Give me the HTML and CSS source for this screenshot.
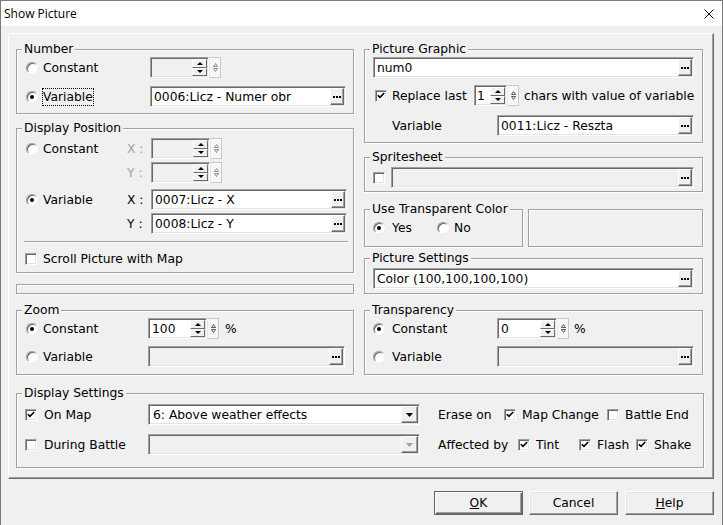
FILE: index.html
```html
<!DOCTYPE html>
<html>
<head>
<meta charset="utf-8">
<link rel="stylesheet" href="styles.css">
</head>
<body>
<div class="win">
  <div class="titlebar">
    <span class="title">Show Picture</span>
    <svg class="close" width="10" height="10" viewBox="0 0 10 10"><path d="M0.5 0.5 L9.5 9.5 M9.5 0.5 L0.5 9.5" stroke="#000" stroke-width="1" fill="none"/></svg>
  </div>

  <div class="panel">
    <div class="cols">
      <div class="col col-l">

        <div class="group g-num">
          <div class="legend">Number</div>
          <div class="row mt7">
            <div class="opt ow133"><span class="radio"></span><span>Constant</span></div>
            <div class="spin dis">
              <div class="spin-box sw59"><span class="spin-val"></span><span class="ud"><i class="up"></i><i class="dn"></i></span></div>
              <span class="spx"><svg width="5" height="9" viewBox="0 0 5 9"><path d="M2.5 0.5 L4.5 3.5 L0.5 3.5 Z M0.5 5.5 L4.5 5.5 L2.5 8.5 Z" fill="none" stroke="#777" stroke-width="0.8"/></svg></span>
            </div>
          </div>
          <div class="row mt8">
            <div class="opt ow133"><span class="radio on"></span><span class="focus">Variable</span></div>
            <div class="field fw196"><span class="txt">0006:Licz - Numer obr</span><span class="dots"><svg width="8" height="2" viewBox="0 0 8 2"><rect x="0" y="0" width="2" height="2"/><rect x="3" y="0" width="2" height="2"/><rect x="6" y="0" width="2" height="2"/></svg></span></div>
          </div>
        </div>

        <div class="group g-pos">
          <div class="legend">Display Position</div>
          <div class="row mt9">
            <div class="opt ow110"><span class="radio"></span><span>Constant</span></div>
            <span class="xy dis-t">X :</span>
            <div class="spin dis">
              <div class="spin-box sw59"><span class="spin-val"></span><span class="ud"><i class="up"></i><i class="dn"></i></span></div>
              <span class="spx"><svg width="5" height="9" viewBox="0 0 5 9"><path d="M2.5 0.5 L4.5 3.5 L0.5 3.5 Z M0.5 5.5 L4.5 5.5 L2.5 8.5 Z" fill="none" stroke="#777" stroke-width="0.8"/></svg></span>
            </div>
          </div>
          <div class="row mt3">
            <span class="ow110"></span>
            <span class="xy dis-t">Y :</span>
            <div class="spin dis">
              <div class="spin-box sw59"><span class="spin-val"></span><span class="ud"><i class="up"></i><i class="dn"></i></span></div>
              <span class="spx"><svg width="5" height="9" viewBox="0 0 5 9"><path d="M2.5 0.5 L4.5 3.5 L0.5 3.5 Z M0.5 5.5 L4.5 5.5 L2.5 8.5 Z" fill="none" stroke="#777" stroke-width="0.8"/></svg></span>
            </div>
          </div>
          <div class="row mt6">
            <div class="opt ow110"><span class="radio on"></span><span>Variable</span></div>
            <span class="xy">X :</span>
            <div class="field fw196"><span class="txt">0007:Licz - X</span><span class="dots"><svg width="8" height="2" viewBox="0 0 8 2"><rect x="0" y="0" width="2" height="2"/><rect x="3" y="0" width="2" height="2"/><rect x="6" y="0" width="2" height="2"/></svg></span></div>
          </div>
          <div class="row mt3">
            <span class="ow110"></span>
            <span class="xy">Y :</span>
            <div class="field fw196"><span class="txt">0008:Licz - Y</span><span class="dots"><svg width="8" height="2" viewBox="0 0 8 2"><rect x="0" y="0" width="2" height="2"/><rect x="3" y="0" width="2" height="2"/><rect x="6" y="0" width="2" height="2"/></svg></span></div>
          </div>
          <div class="sep"></div>
          <div class="row mt5">
            <div class="opt ck-opt"><span class="check"></span><span>Scroll Picture with Map</span></div>
          </div>
        </div>

        <div class="group g-empty"></div>

        <div class="group g-zoom">
          <div class="legend">Zoom</div>
          <div class="row mt7">
            <div class="opt ow131"><span class="radio on"></span><span>Constant</span></div>
            <div class="spin">
              <div class="spin-box sw59"><span class="spin-val">100</span><span class="ud"><i class="up"></i><i class="dn"></i></span></div>
              <span class="spx"><svg width="5" height="9" viewBox="0 0 5 9"><path d="M2.5 0.5 L4.5 3.5 L0.5 3.5 Z M0.5 5.5 L4.5 5.5 L2.5 8.5 Z" fill="none" stroke="#333" stroke-width="0.8"/></svg></span>
            </div>
            <span class="pct">%</span>
          </div>
          <div class="row mt7">
            <div class="opt ow131"><span class="radio"></span><span>Variable</span></div>
            <div class="field dis fw197"><span class="txt"></span><span class="dots"><svg width="8" height="2" viewBox="0 0 8 2"><rect x="0" y="0" width="2" height="2"/><rect x="3" y="0" width="2" height="2"/><rect x="6" y="0" width="2" height="2"/></svg></span></div>
          </div>
        </div>

      </div>

      <div class="col col-r">

        <div class="group g-pg">
          <div class="legend">Picture Graphic</div>
          <div class="row mt7 pl8">
            <div class="field fw321"><span class="txt">num0</span><span class="dots"><svg width="8" height="2" viewBox="0 0 8 2"><rect x="0" y="0" width="2" height="2"/><rect x="3" y="0" width="2" height="2"/><rect x="6" y="0" width="2" height="2"/></svg></span></div>
          </div>
          <div class="row mt7">
            <div class="opt rl-opt"><span class="check on"><svg width="8" height="7" viewBox="0 0 8 7"><path d="M0.8 3.2 L3 5.4 L7.2 1" fill="none" stroke="#000" stroke-width="1.6"/></svg></span><span>Replace last</span></div>
            <div class="spin">
              <div class="spin-box sw33"><span class="spin-val sv1">1</span><span class="ud"><i class="up"></i><i class="dn"></i></span></div>
              <span class="spx"><svg width="5" height="9" viewBox="0 0 5 9"><path d="M2.5 0.5 L4.5 3.5 L0.5 3.5 Z M0.5 5.5 L4.5 5.5 L2.5 8.5 Z" fill="none" stroke="#333" stroke-width="0.8"/></svg></span>
            </div>
            <span class="after-spin">chars with value of variable</span>
          </div>
          <div class="row mt9">
            <span class="lbl-var">Variable</span>
            <div class="field fw197"><span class="txt">0011:Licz - Reszta</span><span class="dots"><svg width="8" height="2" viewBox="0 0 8 2"><rect x="0" y="0" width="2" height="2"/><rect x="3" y="0" width="2" height="2"/><rect x="6" y="0" width="2" height="2"/></svg></span></div>
          </div>
        </div>

        <div class="group g-sprite">
          <div class="legend">Spritesheet</div>
          <div class="row mt9 pl8">
            <span class="check"></span>
            <div class="field dis fw303 ml6"><span class="txt"></span><span class="dots"><svg width="8" height="2" viewBox="0 0 8 2"><rect x="0" y="0" width="2" height="2"/><rect x="3" y="0" width="2" height="2"/><rect x="6" y="0" width="2" height="2"/></svg></span></div>
          </div>
        </div>

        <div class="trow">
          <div class="group g-utc">
            <div class="legend">Use Transparent Color</div>
            <div class="row mt7 pl8">
              <span class="radio on"></span><span class="yes">Yes</span>
              <span class="radio"></span><span class="no">No</span>
            </div>
          </div>
          <div class="group g-blank"></div>
        </div>

        <div class="group g-ps">
          <div class="legend">Picture Settings</div>
          <div class="row mt9 pl8">
            <div class="field fw321"><span class="txt">Color (100,100,100,100)</span><span class="dots"><svg width="8" height="2" viewBox="0 0 8 2"><rect x="0" y="0" width="2" height="2"/><rect x="3" y="0" width="2" height="2"/><rect x="6" y="0" width="2" height="2"/></svg></span></div>
          </div>
        </div>

        <div class="group g-tr">
          <div class="legend">Transparency</div>
          <div class="row mt7">
            <div class="opt ow132"><span class="radio on"></span><span>Constant</span></div>
            <div class="spin">
              <div class="spin-box sw60"><span class="spin-val">0</span><span class="ud"><i class="up"></i><i class="dn"></i></span></div>
              <span class="spx"><svg width="5" height="9" viewBox="0 0 5 9"><path d="M2.5 0.5 L4.5 3.5 L0.5 3.5 Z M0.5 5.5 L4.5 5.5 L2.5 8.5 Z" fill="none" stroke="#333" stroke-width="0.8"/></svg></span>
            </div>
            <span class="pct pct5">%</span>
          </div>
          <div class="row mt7">
            <div class="opt ow132"><span class="radio"></span><span>Variable</span></div>
            <div class="field dis fw197"><span class="txt"></span><span class="dots"><svg width="8" height="2" viewBox="0 0 8 2"><rect x="0" y="0" width="2" height="2"/><rect x="3" y="0" width="2" height="2"/><rect x="6" y="0" width="2" height="2"/></svg></span></div>
          </div>
        </div>

      </div>
    </div>

    <div class="group g-ds">
      <div class="legend">Display Settings</div>
      <div class="row mt10">
        <div class="opt ds-opt"><span class="check on"><svg width="8" height="7" viewBox="0 0 8 7"><path d="M0.8 3.2 L3 5.4 L7.2 1" fill="none" stroke="#000" stroke-width="1.6"/></svg></span><span>On Map</span></div>
        <div class="combo"><span class="txt">6: Above weather effects</span><span class="arrow"><svg width="7" height="4" viewBox="0 0 7 4"><path d="M0 0 L7 0 L3.5 4 Z" fill="#000"/></svg></span></div>
        <span class="ds-lbl w66">Erase on</span>
        <span class="check on"><svg width="8" height="7" viewBox="0 0 8 7"><path d="M0.8 3.2 L3 5.4 L7.2 1" fill="none" stroke="#000" stroke-width="1.6"/></svg></span>
        <span class="ck-lbl w85">Map Change</span>
        <span class="check"></span>
        <span class="ck-lbl">Battle End</span>
      </div>
      <div class="row mt9">
        <div class="opt ds-opt"><span class="check"></span><span>During Battle</span></div>
        <div class="combo dis"><span class="txt"></span><span class="arrow"><svg width="7" height="4" viewBox="0 0 7 4"><path d="M0 0 L7 0 L3.5 4 Z" fill="#a0a0a0"/></svg></span></div>
        <span class="ds-lbl w80">Affected by</span>
        <span class="check on"><svg width="8" height="7" viewBox="0 0 8 7"><path d="M0.8 3.2 L3 5.4 L7.2 1" fill="none" stroke="#000" stroke-width="1.6"/></svg></span>
        <span class="ck-lbl w43">Tint</span>
        <span class="check on"><svg width="8" height="7" viewBox="0 0 8 7"><path d="M0.8 3.2 L3 5.4 L7.2 1" fill="none" stroke="#000" stroke-width="1.6"/></svg></span>
        <span class="ck-lbl w39">Flash</span>
        <span class="check on"><svg width="8" height="7" viewBox="0 0 8 7"><path d="M0.8 3.2 L3 5.4 L7.2 1" fill="none" stroke="#000" stroke-width="1.6"/></svg></span>
        <span class="ck-lbl">Shake</span>
      </div>
    </div>
  </div>

  <div class="btns">
    <div class="btn def"><span><u>O</u>K</span></div>
    <div class="btn">Cancel</div>
    <div class="btn help"><span><u>H</u>elp</span></div>
  </div>
</div>
</body>
</html>
```

FILE: styles.css
```css
* { box-sizing: border-box; }

body {
  margin: 0;
  background: #f0f0f0;
  font-family: "DejaVu Sans", Verdana, sans-serif;
  font-size: 12.3px;
  color: #000;
}

.win {
  width: 723px;
  height: 525px;
  border: 1px solid #7a7a7a;
  border-bottom: none;
  background: #f0f0f0;
  overflow: hidden;
}

.titlebar {
  height: 25px;
  background: #fff;
  display: flex;
  align-items: center;
}
.title {
  font-family: "Open Sans", "Noto Sans", sans-serif;
  font-size: 12px;
  padding-left: 3px;
}
.close { margin-left: auto; margin-right: 8px; }

.panel {
  margin: 7px 0 0 7px;
  width: 706px;
  height: 446px;
  border: 1px solid;
  border-color: #fff #696969 #696969 #fff;
  box-shadow: inset -1px -1px 0 #a0a0a0;
  padding: 15px 0 0 7px;
}

.cols { display: flex; gap: 10px; }
.col { display: flex; flex-direction: column; flex: none; }
.col-l { width: 338px; }
.col-r { width: 339px; }

.group {
  border: 1px solid #a0a0a0;
  box-shadow: inset 1px 1px 0 #fff, 1px 1px 0 #fff;
  flex: none;
}
.legend {
  height: 15px;
  line-height: 15px;
  margin: -8px 0 -7px 5px;
  padding: 0 2px;
  background: #f0f0f0;
  width: max-content;
}

.g-num { height: 65px; }
.g-pos { height: 145px; margin-top: 14px; }
.g-empty { height: 10px; margin-top: 11px; }
.g-zoom { height: 65px; margin-top: 16px; }

.g-pg { height: 94px; }
.g-sprite { height: 35px; margin-top: 14px; }
.trow { display: flex; gap: 5px; margin-top: 17px; }
.g-utc { width: 159px; height: 38px; }
.g-blank { width: 175px; height: 38px; }
.g-ps { height: 36px; margin-top: 11px; }
.g-tr { height: 65px; margin-top: 16px; }

.g-ds { width: 688px; height: 75px; margin-top: 18px; }

.row { display: flex; align-items: center; height: 21px; white-space: nowrap; }
.mt3 { margin-top: 3px; }
.mt5 { margin-top: 5px; }
.mt6 { margin-top: 6px; }
.mt7 { margin-top: 7px; }
.mt8 { margin-top: 8px; }
.mt9 { margin-top: 9px; }
.mt10 { margin-top: 10px; }
.pl8 { padding-left: 8px; }
.ml6 { margin-left: 6px; }

.opt { display: flex; align-items: center; gap: 5px; flex: none; height: 21px; }
.ow133 { width: 133px; padding-left: 9px; }
.ow110 { width: 110px; padding-left: 9px; flex: none; }
.ow131 { width: 131px; padding-left: 9px; }
.ow132 { width: 132px; padding-left: 8px; gap: 7px; }
.ck-opt { padding-left: 8px; gap: 6px; }
.rl-opt { width: 109px; padding-left: 10px; gap: 5px; }
.ds-opt { width: 131px; padding-left: 8px; gap: 7px; }

.lbl-var { width: 132px; padding-left: 27px; flex: none; }
.after-spin { margin-left: 5px; }
.xy { width: 24px; flex: none; }
.dis-t { color: #a0a0a0; }
.pct { margin-left: 6px; }
.pct5 { margin-left: 5px; }

.yes { width: 45px; margin-left: 7px; }
.no { margin-left: 5px; }

.focus {
  border: 1px dotted #000;
  padding: 1px 0;
  margin-left: -1px;
  line-height: 14px;
}

/* radio */
.radio {
  width: 12px;
  height: 12px;
  border-radius: 50%;
  background: #fff;
  border: 1px solid;
  border-color: #a0a0a0 #fff #fff #a0a0a0;
  box-shadow: inset 1px 1px 0 #696969, 0 0 0 0.5px #e3e3e3;
  display: flex;
  align-items: center;
  justify-content: center;
  flex: none;
}
.radio.on::after {
  content: "";
  width: 4px;
  height: 4px;
  border-radius: 50%;
  background: #000;
}

/* checkbox */
.check {
  width: 12px;
  height: 12px;
  background: #fff;
  border: 1px solid;
  border-color: #a0a0a0 #fff #fff #a0a0a0;
  box-shadow: inset 1px 1px 0 #696969, inset -1px -1px 0 #e3e3e3;
  display: flex;
  align-items: center;
  justify-content: center;
  flex: none;
}
.ck-lbl { margin-left: 6px; }
.ds-lbl { margin-left: 18px; }
.w66 { width: 66px; flex: none; }
.w85 { width: 85px; flex: none; }
.w80 { width: 80px; flex: none; }
.w43 { width: 43px; flex: none; }
.w39 { width: 39px; flex: none; }

/* text field */
.field, .combo {
  height: 21px;
  display: flex;
  align-items: center;
  background: #fff;
  border: 1px solid;
  border-color: #a0a0a0 #fff #fff #a0a0a0;
  box-shadow: inset 1px 1px 0 #696969, inset -1px -1px 0 #e3e3e3;
  padding: 1px;
  flex: none;
}
.field.dis, .combo.dis { background: #f0f0f0; }
.fw196 { width: 196px; }
.fw197 { width: 197px; }
.fw321 { width: 321px; }
.fw303 { width: 303px; }
.txt { flex: 1; padding-left: 2px; overflow: hidden; white-space: nowrap; }

.dots, .arrow {
  height: 17px;
  background: #f0f0f0;
  border: 1px solid;
  border-color: #fff #696969 #696969 #fff;
  box-shadow: inset -1px -1px 0 #a0a0a0;
  display: flex;
  align-items: center;
  justify-content: center;
  flex: none;
}
.dots { width: 14px; padding-top: 1px; }
.arrow { width: 17px; }

.combo { width: 272px; }
.combo .txt { padding-left: 3px; }

/* spin */
.spin { display: flex; height: 21px; flex: none; }
.spin-box {
  display: flex;
  background: #fff;
  border: 1px solid;
  border-color: #a0a0a0 #fff #fff #a0a0a0;
  box-shadow: inset 1px 1px 0 #696969, inset -1px -1px 0 #e3e3e3;
  padding: 1px;
}
.spin.dis .spin-box { background: #f0f0f0; }
.sw59 { width: 59px; }
.sw60 { width: 60px; }
.sw33 { width: 33px; }
.spin-val { flex: 1; padding-left: 2px; display: flex; align-items: center; }
.sv1 { padding-left: 1px; }
.ud { width: 15px; display: flex; flex-direction: column; flex: none; }
.ud i {
  flex: 1;
  display: flex;
  align-items: center;
  justify-content: center;
  background: #f0f0f0;
  border: 1px solid;
  border-color: #fff #696969 #696969 #fff;
}
.ud i::after { content: ""; width: 0; height: 0; border-left: 3px solid transparent; border-right: 3px solid transparent; }
.ud .up::after { border-bottom: 3px solid #000; }
.ud .dn::after { border-top: 3px solid #000; }
.spx {
  width: 12px;
  display: flex;
  align-items: center;
  justify-content: center;
  background: #f7f7f7;
  border: 1px solid #c8c8c8;
  border-left-color: #e8e8e8;
}

.sep {
  margin: 7px 0 0 7px;
  width: 324px;
  height: 2px;
  border-top: 1px solid #a0a0a0;
  border-bottom: 1px solid #fff;
}

/* buttons */
.btns {
  display: flex;
  gap: 6px;
  margin-top: 12px;
  padding-left: 433px;
}
.btn {
  width: 89px;
  height: 24px;
  border: 1px solid;
  border-color: #fff #696969 #696969 #fff;
  box-shadow: inset -1px -1px 0 #a0a0a0, inset 1px 1px 0 #e3e3e3;
  background: #f0f0f0;
  display: flex;
  align-items: center;
  justify-content: center;
}
.btn.def {
  border: 1px solid #646464;
  box-shadow: inset 1px 1px 0 #fff, inset -1px -1px 0 #696969, inset -2px -2px 0 #a0a0a0;
}
.btn.help { margin-left: 1px; }
```
